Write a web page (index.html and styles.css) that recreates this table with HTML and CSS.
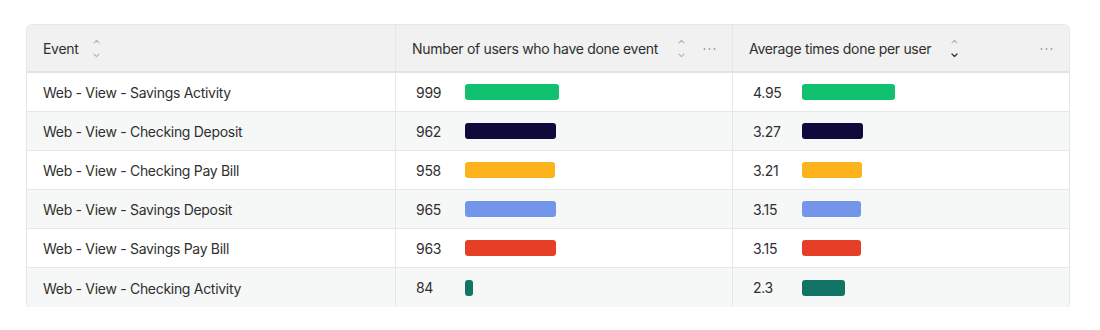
FILE: index.html
```html
<!DOCTYPE html>
<html>
<head>
<meta charset="utf-8">
<link rel="stylesheet" href="styles.css">
</head>
<body>
<div class="card">
  <div class="row head">
    <div class="cell c1">
      <span class="htext">Event</span>
      <span class="sort"><svg width="7" height="20" viewBox="0 0 7 20"><path d="M1 4.9 L3.5 2.4 L6 4.9" class="off"/><path d="M1 16.1 L3.5 18.6 L6 16.1" class="off"/></svg></span>
    </div>
    <div class="cell c2">
      <span class="htext">Number of users who have done event</span>
      <span class="sort"><svg width="7" height="20" viewBox="0 0 7 20"><path d="M1 4.9 L3.5 2.4 L6 4.9" class="off"/><path d="M1 16.1 L3.5 18.6 L6 16.1" class="off"/></svg></span>
      <span class="more"><svg width="13" height="4" viewBox="0 0 13 4"><circle cx="1.5" cy="2" r="0.9"/><circle cx="6.5" cy="2" r="0.9"/><circle cx="11.5" cy="2" r="0.9"/></svg></span>
    </div>
    <div class="cell c3">
      <span class="htext">Average times done per user</span>
      <span class="sort"><svg width="7" height="20" viewBox="0 0 7 20"><path d="M1 4.9 L3.5 2.4 L6 4.9" class="off"/><path d="M1 16.1 L3.5 18.6 L6 16.1" class="on"/></svg></span>
      <span class="more"><svg width="13" height="4" viewBox="0 0 13 4"><circle cx="1.5" cy="2" r="0.9"/><circle cx="6.5" cy="2" r="0.9"/><circle cx="11.5" cy="2" r="0.9"/></svg></span>
    </div>
  </div>

  <div class="row">
    <div class="cell c1">Web - View - Savings Activity</div>
    <div class="cell c2"><span class="num">999</span><span class="bar green" style="width:94px"></span></div>
    <div class="cell c3"><span class="num">4.95</span><span class="bar green" style="width:93px"></span></div>
  </div>
  <div class="row alt">
    <div class="cell c1">Web - View - Checking Deposit</div>
    <div class="cell c2"><span class="num">962</span><span class="bar navy" style="width:91px"></span></div>
    <div class="cell c3"><span class="num">3.27</span><span class="bar navy" style="width:61px"></span></div>
  </div>
  <div class="row">
    <div class="cell c1">Web - View - Checking Pay Bill</div>
    <div class="cell c2"><span class="num">958</span><span class="bar yellow" style="width:90px"></span></div>
    <div class="cell c3"><span class="num">3.21</span><span class="bar yellow" style="width:60px"></span></div>
  </div>
  <div class="row alt">
    <div class="cell c1">Web - View - Savings Deposit</div>
    <div class="cell c2"><span class="num">965</span><span class="bar blue" style="width:91px"></span></div>
    <div class="cell c3"><span class="num">3.15</span><span class="bar blue" style="width:59px"></span></div>
  </div>
  <div class="row">
    <div class="cell c1">Web - View - Savings Pay Bill</div>
    <div class="cell c2"><span class="num">963</span><span class="bar red" style="width:91px"></span></div>
    <div class="cell c3"><span class="num">3.15</span><span class="bar red" style="width:59px"></span></div>
  </div>
  <div class="row alt last">
    <div class="cell c1">Web - View - Checking Activity</div>
    <div class="cell c2"><span class="num">84</span><span class="bar teal" style="width:8px"></span></div>
    <div class="cell c3"><span class="num">2.3</span><span class="bar teal" style="width:43px"></span></div>
  </div>
</div>
</body>
</html>
```

FILE: styles.css
```css
* { box-sizing: border-box; }
html, body { background: #ffffff; }
body {
  margin: 0;
  padding: 25px 31px 0 27px;
  font-family: "Inter", "Liberation Sans", sans-serif;
  font-size: 14px;
  letter-spacing: -0.3px;
  color: #2f2f2f;
}
.card {
  width: 1042px;
  border-radius: 5px;
  background: #fff;
  box-shadow: 0 0 0 1px #e6e8e7, 0 1px 3px rgba(0,0,0,0.08);
  overflow: hidden;
}
.row {
  display: grid;
  grid-template-columns: 369px 337px 336px;
  height: 39px;
  border-bottom: 1px solid #e6e8e7;
  background: #fff;
}
.row.alt { background: #f6f8f7; }
.row.last { border-bottom: none; height: 39px; }
.row.head {
  height: 48px;
  background: #f0f1f0;
  border-bottom: 2px solid #e2e4e3;
}
.cell {
  display: flex;
  align-items: center;
  padding: 0 16px;
  border-right: 1px solid #e6e8e7;
}
.cell.c3 { border-right: none; }
.row:not(.head) .c1 { padding-top: 1px; }
.htext { white-space: nowrap; }
.sort {
  display: flex;
  margin-left: 20px;
  height: 20px;
}
.c1 .sort { margin-left: 14px; }
.sort path { fill: none; stroke-width: 1.1; stroke-linecap: round; stroke-linejoin: round; }
.sort .off { stroke: #b0b3b2; }
.sort .on { stroke: #3a3a3a; stroke-width: 1.4; }
.more {
  margin-left: auto;
  display: flex;
  padding-top: 2px;
}
.more circle { fill: #9a9d9c; }
.num {
  width: 53px;
  padding-left: 4px;
  flex: none;
}
.bar {
  display: block;
  height: 16px;
  border-radius: 3px;
}
.green { background: #10c16f; }
.navy { background: #0f0a3c; }
.yellow { background: #fdb31c; }
.blue { background: #7395ea; }
.red { background: #e53f27; }
.teal { background: #127465; }
```
